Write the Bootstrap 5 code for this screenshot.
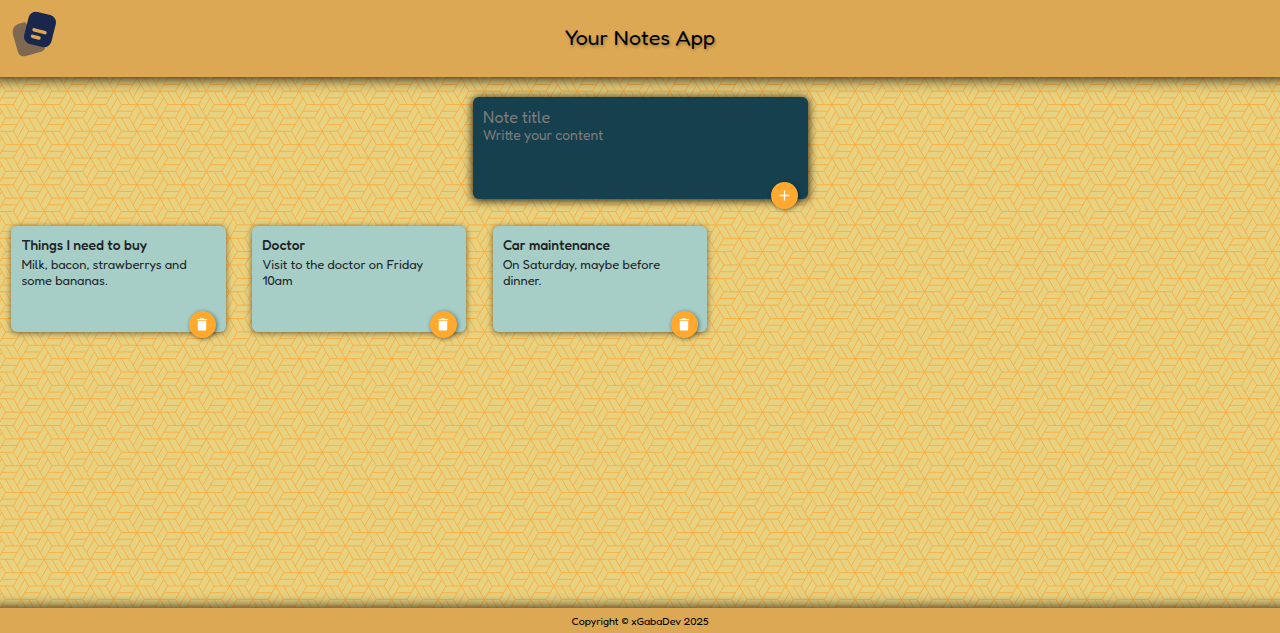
<!DOCTYPE html>
<html lang="en"><head><meta charset="utf-8"><title>Your Notes App</title>
<meta name="viewport" content="width=device-width, initial-scale=1">
<link href="https://cdn.jsdelivr.net/npm/bootstrap@5.3.0/dist/css/bootstrap.min.css" rel="stylesheet">
<style>
body{font-family:Fredoka,Outfit,Lato,sans-serif;background:#e7d282;color:#000}
.backdrop{z-index:-1;inset:0}
.bar{background:#dca853;position:relative}
.site-head{height:77px;padding-bottom:2px;box-shadow:0 -9px 14px 10px #000e}
.site-foot{height:25px;box-shadow:0 9px 12px 10px #000c;font-size:10.75px;padding-top:6px}
.logo{left:12px;top:11px}
.site-head h1{font-size:21.5px;text-shadow:1px 2px 3px #0004}
.composer{width:335px;height:102.400px;background:#17404e;margin:20px auto 26.600px;padding:10px 10px 10px 10.500px;border-radius:6px;box-shadow:0 1px 8px 1px #000c}
.composer input,.composer textarea{background:none;border:0;outline:0;padding:0;display:block;width:100%;resize:none}
.composer ::placeholder{color:#7b7b7b;opacity:1}
.composer input{font-size:16.1px;height:20px;line-height:20px}
.composer textarea{font-size:13.9px;line-height:16px;height:60px;overflow:hidden}
.notes{gap:26.600px;padding-left:11.400px}
.note-box{width:214.200px;height:106px;background:#a6cdc6;border-radius:6px;padding:9px 10px;box-shadow:0 1px 6px #0008;color:#212529}
.note-box h2{font-size:13.9px;font-weight:500;line-height:19px;margin:0 0 2px}
.note-box p{font-size:12.85px;line-height:16px;margin:0;padding-right:16px}
.round{position:absolute;width:27px;height:27px;border-radius:50%;background:#ffaa2f;right:10px;bottom:-10px;border:0;padding:0;box-shadow:1px 1px 4px #0007}
.note-box .round{right:9.600px;bottom:-6.500px}
</style></head><body class="d-flex flex-column vh-100 overflow-hidden position-relative">
<svg class="backdrop position-absolute w-100 h-100"><defs><path id="cell" d="M-15.450 0H15.450M-7.720 -13.370L7.720 13.370M-7.720 13.370L7.720 -13.370M3.860 -6.690H19.310M7.720 0L15.450 13.370M3.860 6.690L-3.860 20.060"/></defs><g id="cubes" fill="none" stroke="#fbab3b" stroke-width=".86"></g></svg>
<header class="bar site-head d-flex align-items-center justify-content-center">
<svg class="logo position-absolute" width="46" height="47" viewBox="12 11 46 47"><path d="M18 24L25 22L45 48Q44 51 40 52L26 56Q20 57.500 18 52L13 35Q11.500 27 18 24Z" fill="#7f6852"/><rect x="26" y="13" width="28" height="33" rx="7.500" transform="rotate(14 40 29.500)" fill="#1b264d"/><path d="M34 29.800L45 32.700M32.500 36.300L39 38" stroke="#dca853" stroke-width="3.400" stroke-linecap="round"/></svg>
<h1 class="m-0 fw-normal">Your Notes App</h1></header>
<main class="flex-grow-1">
<form class="composer position-relative"><input placeholder="Note title"><textarea placeholder="Writte your content"></textarea><button type="button" class="round d-flex align-items-center justify-content-center" aria-label="Add"><svg width="11" height="11" viewBox="0 0 11 11"><path d="M5.500 .5V10.500M.5 5.500H10.500" stroke="#fff" stroke-width="1.300"/></svg></button></form>
<div class="notes d-flex">
<article class="note-box position-relative"><h2>Things I need to buy</h2><p>Milk, bacon, strawberrys and some bananas.</p><button class="round d-flex align-items-center justify-content-center" aria-label="Delete"><svg width="10" height="13" viewBox="0 0 10 13"><path d="M0 1H3L3.500 .3H6.500L7 1H10V2.300H0ZM.8 3H9.200V11.500Q9.200 12.500 8.200 12.500H1.800Q.8 12.500 .8 11.500Z" fill="#fff"/></svg></button></article>
<article class="note-box position-relative"><h2>Doctor</h2><p>Visit to the doctor on Friday 10am</p><button class="round d-flex align-items-center justify-content-center" aria-label="Delete"><svg width="10" height="13" viewBox="0 0 10 13"><path d="M0 1H3L3.500 .3H6.500L7 1H10V2.300H0ZM.8 3H9.200V11.500Q9.200 12.500 8.200 12.500H1.800Q.8 12.500 .8 11.500Z" fill="#fff"/></svg></button></article>
<article class="note-box position-relative"><h2>Car maintenance</h2><p>On Saturday, maybe before dinner.</p><button class="round d-flex align-items-center justify-content-center" aria-label="Delete"><svg width="10" height="13" viewBox="0 0 10 13"><path d="M0 1H3L3.500 .3H6.500L7 1H10V2.300H0ZM.8 3H9.200V11.500Q9.200 12.500 8.200 12.500H1.800Q.8 12.500 .8 11.500Z" fill="#fff"/></svg></button></article>
</div></main>
<footer class="bar site-foot text-center">Copyright © xGabaDev 2025</footer>
<script>
// Tile the cube lattice over the backdrop
let tiles = '';
for (let i = -1; i < 57; i++)
  for (let j = -2; j < 22; j++)
    tiles += `<use href="#cell" x="${21 + (i - 1) * 23.17}" y="${64.4 + j * 26.75 + (i % 2 ? 0 : 13.37)}"/>`;
document.getElementById('cubes').innerHTML = tiles;
</script>
<script src="https://cdn.jsdelivr.net/npm/bootstrap@5.3.0/dist/js/bootstrap.bundle.min.js"></script></body></html>
